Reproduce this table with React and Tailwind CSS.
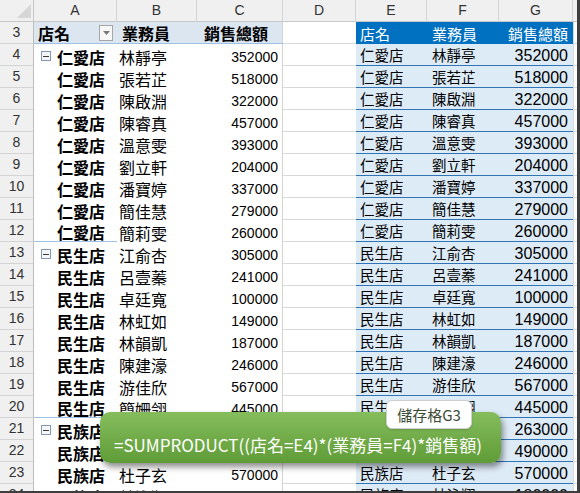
import React from "react";

const cjk = "font-['Noto_Sans_CJK_TC','Noto_Sans_CJK_SC',sans-serif]";
const num = "font-['Liberation_Sans',Arial,sans-serif]";

const data = [
  ["仁愛店", "林靜亭", 352000],
  ["仁愛店", "張若芷", 518000],
  ["仁愛店", "陳啟淵", 322000],
  ["仁愛店", "陳睿真", 457000],
  ["仁愛店", "溫意雯", 393000],
  ["仁愛店", "劉立軒", 204000],
  ["仁愛店", "潘寶婷", 337000],
  ["仁愛店", "簡佳慧", 279000],
  ["仁愛店", "簡莉雯", 260000],
  ["民生店", "江俞杏", 305000],
  ["民生店", "呂壹蓁", 241000],
  ["民生店", "卓廷寬", 100000],
  ["民生店", "林虹如", 149000],
  ["民生店", "林韻凱", 187000],
  ["民生店", "陳建濠", 246000],
  ["民生店", "游佳欣", 567000],
  ["民生店", "簡姍翎", 445000],
  ["民族店", "王怡婷", 263000],
  ["民族店", "吳家豪", 490000],
  ["民族店", "杜子玄", 570000],
  ["民族店", "林泳翔", 180000],
];

const cols = [
  ["A", "w-[83px]"],
  ["B", "w-[80px]"],
  ["C", "w-[86px]"],
  ["D", "w-[73px]"],
  ["E", "w-[71px]"],
  ["F", "w-[72px]"],
  ["G", "w-[74px]"],
];

function RowHead({ n }) {
  return (
    <div className={`w-[34px] shrink-0 h-full flex items-center justify-center bg-[#f0f0f0] border-r border-b border-r-[#bdbdbd] border-b-[#d4d4d4] text-[14px] text-[#333] ${num}`}>
      {n}
    </div>
  );
}

function CollapseBox() {
  return (
    <span className="w-[10px] h-[10px] mr-[6px] mt-[2px] border border-[#8497b0] bg-[#f4f6f9] flex items-center justify-center shrink-0">
      <span className="w-[6px] h-px bg-[#3c3c3c]" />
    </span>
  );
}

export default function App() {
  return (
    <div className="relative w-[580px] h-[493px] overflow-hidden bg-white border-r-[3px] border-b-[2px] border-[#3e3e3e]">
      {/* column letters */}
      <div className="flex h-[22px]">
        <div className="w-[34px] shrink-0 h-full bg-[#f0f0f0] border-r border-b border-[#c8c8c8] flex items-end justify-end pr-[2px] pb-[3px]">
          <svg width="14" height="14" viewBox="0 0 14 14">
            <polygon points="14,0 14,14 0,14" fill="#d6d6d6" />
          </svg>
        </div>
        {cols.map(([c, w]) => (
          <div key={c} className={`${w} shrink-0 h-full bg-[#f0f0f0] border-r border-b border-r-[#d4d4d4] border-b-[#c8c8c8] flex items-center justify-center text-[14px] text-[#333] ${num}`}>
            {c}
          </div>
        ))}
        <div className="w-[4px] shrink-0 h-full bg-[#f0f0f0] border-b border-[#c8c8c8]" />
      </div>

      {/* row 3 headers */}
      <div className="flex h-[22px]">
        <RowHead n={3} />
        <div className={`w-[249px] shrink-0 h-full flex bg-[#dce6f1] border-b border-r border-b-[#9bc2e6] border-r-[#d4d4d4] font-bold text-[16px] text-black ${cjk}`}>
          <div className="w-[83px] flex items-center pl-[4px] pr-[4px] justify-between">
            <span className="leading-none">店名</span>
            <span className="w-[14px] h-[16px] border border-[#a6a6a6] bg-[#f7f7f7] flex items-center justify-center">
              <svg width="7" height="4" viewBox="0 0 7 4">
                <polygon points="0,0 7,0 3.5,4" fill="#7a7a7a" />
              </svg>
            </span>
          </div>
          <div className="w-[80px] flex items-center pl-[5px] leading-none">業務員</div>
          <div className="w-[85px] flex items-center justify-end pr-[14px] leading-none">銷售總額</div>
        </div>
        <div className="w-[73px] shrink-0 h-full border-b border-[#d9d9d9]" />
        <div className={`w-[217px] shrink-0 h-full flex bg-[#0070c0] text-white text-[15px] ${cjk}`}>
          <div className="w-[71px] flex items-center pl-[4px] leading-none">店名</div>
          <div className="w-[72px] flex items-center pl-[5px] leading-none">業務員</div>
          <div className="w-[74px] flex items-center justify-end pr-[5px] leading-none">銷售總額</div>
        </div>
        <div className="w-[4px] shrink-0 h-full border-l border-b border-[#d9d9d9]" />
      </div>

      {data.map(([store, name, amount], i) => {
        const first = i === 0 || data[i - 1][0] !== store;
        const last = i < data.length - 1 && data[i + 1][0] !== store;
        return (
          <div key={i} className="flex h-[22px]">
            <RowHead n={i + 4} />
            <div className={`w-[83px] shrink-0 h-full flex items-center pl-[7px] font-bold text-[16px] text-black ${cjk} ${last ? "border-b border-[#9bc2e6]" : ""}`}>
              {first ? <CollapseBox /> : <span className="w-[16px] shrink-0" />}
              <span className="leading-none pt-[3px]">{store}</span>
            </div>
            <div className={`w-[80px] shrink-0 h-full flex items-center pl-[2px] text-[16px] text-black ${cjk}`}>
              <span className="leading-none pt-[3px]">{name}</span>
            </div>
            <div className={`w-[86px] shrink-0 h-full flex items-center justify-end pr-[4px] border-r border-[#d4d4d4] text-[14px] text-black ${num}`}>
              <span className="leading-none pt-[4px]">{amount}</span>
            </div>
            <div className="w-[73px] shrink-0 h-full border-b border-[#d9d9d9]" />
            <div className={`w-[217px] shrink-0 h-full flex bg-[#ddebf7] border-b border-[#2f75b5] text-black`}>
              <div className={`w-[71px] flex items-center pl-[4px] text-[14.5px] ${cjk}`}>
                <span className="leading-none pt-[1px]">{store}</span>
              </div>
              <div className={`w-[72px] flex items-center pl-[5px] text-[14.5px] ${cjk}`}>
                <span className="leading-none pt-[1px]">{name}</span>
              </div>
              <div className={`w-[74px] flex items-center justify-end pr-[5px] text-[16px] ${num}`}>
                <span className="leading-none pt-[2px]">{amount}</span>
              </div>
            </div>
            <div className="w-[4px] shrink-0 h-full border-l border-b border-[#d9d9d9]" />
          </div>
        );
      })}

      {/* formula callout */}
      <div className="absolute left-[100px] top-[412px] w-[401px] h-[51px] rounded-[10px] bg-gradient-to-b from-[#86bd5c] to-[#5f9c37] shadow-[2px_4px_6px_rgba(0,0,0,0.45)] flex items-center pl-[14px] pt-[14px]">
        <span className={`text-white text-[17px] leading-none whitespace-nowrap ${cjk}`}>
          =SUMPRODUCT((店名=E4)*(業務員=F4)*銷售額)
        </span>
      </div>
      <div className={`absolute left-[386px] top-[400px] w-[86px] h-[29px] rounded-[6px] bg-white border border-[#cfcfcf] shadow-[0_1px_2px_rgba(0,0,0,0.15)] flex items-center justify-center text-[15px] text-[#3b4a35] ${cjk}`}>
        <span className="leading-none">儲存格G3</span>
      </div>
    </div>
  );
}
